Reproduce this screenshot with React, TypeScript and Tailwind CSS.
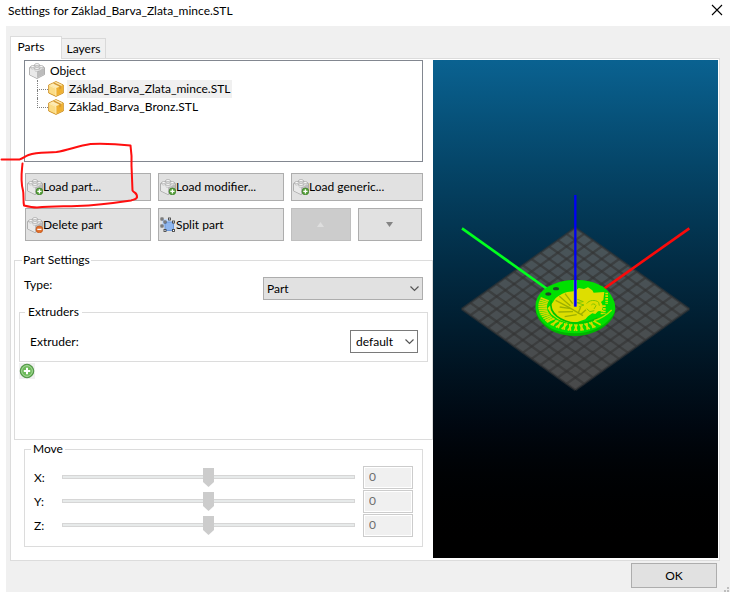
import { useState } from "react";

function BrickIcon({ badge }: { badge?: "add" | "remove" }) {
  return (
    <svg className="size-4 shrink-0" viewBox="0 0 16 16" aria-hidden="true">
      <path d="M.5 4.6 8 1.8l7.500 2.800v7L8 15.500.5 11.800Z" fill="#f6f6f6" stroke="#989898" strokeWidth=".8" />
      <path d="M.9 5.2 8 8.400v6.700L.9 11.600Z" fill="#e9e9e9" />
      <path d="M8 8.400 15.100 5.200v6.300L8 15.100Z" fill="#bcbcbc" />
      <g fill="#fbfbfb" stroke="#9a9a9a" strokeWidth=".6">
        <path d="M5.800 1.500v1.600c0 1.200 4.400 1.200 4.400 0V1.500" />
        <ellipse cx="8" cy="1.500" rx="2.200" ry="1" />
        <path d="M1.800 3.500v1.600c0 1.200 4 1.200 4 0V3.500" />
        <ellipse cx="3.800" cy="3.500" rx="2" ry="1" />
        <path d="M10.200 3.500v1.600c0 1.200 4 1.200 4 0V3.500" />
        <ellipse cx="12.200" cy="3.500" rx="2" ry="1" />
        <path d="M5.800 5.600v1.700c0 1.200 4.400 1.200 4.400 0V5.600" />
        <ellipse cx="8" cy="5.600" rx="2.200" ry="1" />
      </g>
      {badge && (
        <g>
          <circle cx="12.4" cy="12.4" r="3.4" fill={badge === "add" ? "#5aa33c" : "#e2702c"} stroke={badge === "add" ? "#2f7420" : "#b94d13"} strokeWidth=".6" />
          <path d={badge === "add" ? "M10.3 12.4h4.2M12.4 10.3v4.2" : "M10.3 12.4h4.2"} stroke="#fff" strokeWidth="1.3" />
        </g>
      )}
    </svg>
  );
}

function PartIcon() {
  return (
    <svg className="size-4 shrink-0" viewBox="0 0 16 16" aria-hidden="true">
      <path d="M8 .6 15.3 4v8L8 15.4.7 12V4Z" fill="#f8cf63" stroke="#c98a1e" strokeWidth=".9" />
      <path d="M1.2 4.3 8 7.6v7.2l-6.8-3.2Z" fill="#fbdc86" />
      <path d="M8 7.6 14.8 4.3v7.3L8 14.8Z" fill="#efb030" />
      <path d="M1.6 4 8 1.1 14.4 4 8 7.1Z" fill="#fdebb5" />
      <path d="M5 2.5 11.3 5.5v2.9l1.8-.9V4.7L6.8 1.7Z" fill="#d69a34" />
      <path d="M1.2 4.3 8 7.5v7.3" fill="none" stroke="#fff3cd" strokeWidth=".7" />
    </svg>
  );
}

function SplitIcon() {
  const handles = [[2, 2], [9.5, 2], [2, 9], [5, 5], [13.5, 5], [5, 13.5], [13.5, 13.5]];
  return (
    <svg className="size-4 shrink-0" viewBox="0 0 16 16" aria-hidden="true">
      <rect x="2" y="2" width="8" height="7" fill="#c7dbf7" />
      <rect x="5" y="5" width="8.5" height="8.5" fill="#8fb6ee" stroke="#6a98dc" />
      {handles.map(([x, y]) => (
        <rect key={`${x}-${y}`} x={x - 1} y={y - 1} width="2" height="2" fill="#fff" stroke="#444" strokeWidth=".9" />
      ))}
    </svg>
  );
}

function AddIcon() {
  return (
    <svg className="size-4" viewBox="0 0 16 16" aria-hidden="true">
      <circle cx="8" cy="8" r="6.8" fill="#58a948" stroke="#3f8634" strokeWidth=".8" />
      <circle cx="8" cy="8" r="5.4" fill="#6dba5a" stroke="#b5dfaa" strokeWidth=".9" />
      <path d="M4.8 8h6.4M8 4.8v6.4" stroke="#fff" strokeWidth="2" />
    </svg>
  );
}

function Chevron() {
  return (
    <svg className="pointer-events-none absolute right-1 top-2 h-2 w-[9px]" viewBox="0 0 9 8" aria-hidden="true">
      <path d="M.5 1.5l4 4 4-4" fill="none" stroke="#555" strokeWidth="1.2" />
    </svg>
  );
}

const buttonStyle = "flex items-center border border-[#adadad] bg-[#e1e1e1]";

function Tree() {
  return (
    <ul className="h-[102px] border border-[#828790] bg-white pl-1 pt-px leading-[18px]">
      <li>
        <div className="flex h-[18px] items-center gap-[5px]">
          <BrickIcon />
          Object
        </div>
        <ul className="pl-2">
          {["Základ_Barva_Zlata_mince.STL", "Základ_Barva_Bronz.STL"].map((name, i) => (
            <li key={name} className="flex h-[18px] items-center">
              <div className="w-[11px] self-stretch">
                <div className="h-[10px] border-b border-l border-dotted border-[#808080]" />
                {i === 0 && <div className="h-2 border-l border-dotted border-[#808080]" />}
              </div>
              <PartIcon />
              <span className={i === 0 ? "ml-[3px] bg-[#f0f0f0] px-[2px]" : "ml-[3px] px-[2px]"}>{name}</span>
            </li>
          ))}
        </ul>
      </li>
    </ul>
  );
}

function AxisRow({ axis }: { axis: string }) {
  const id = `move-${axis}`;
  return (
    <div className="flex h-6 items-center">
      <label htmlFor={id} className="w-7 shrink-0 pt-px">
        {axis}:
      </label>
      <input
        id={id}
        type="range"
        disabled
        defaultValue={50}
        className="h-5 min-w-0 flex-1 appearance-none bg-transparent [&::-webkit-slider-runnable-track]:h-1 [&::-webkit-slider-runnable-track]:border [&::-webkit-slider-runnable-track]:border-[#d6d6d6] [&::-webkit-slider-runnable-track]:bg-[#e7eaea] [&::-webkit-slider-thumb]:-mt-2 [&::-webkit-slider-thumb]:h-[19px] [&::-webkit-slider-thumb]:w-[11px] [&::-webkit-slider-thumb]:appearance-none [&::-webkit-slider-thumb]:bg-[#cccccc] [&::-webkit-slider-thumb]:[clip-path:polygon(0_0,100%_0,100%_74%,50%_100%,0_74%)]"
      />
      <input
        type="text"
        disabled
        defaultValue="0"
        aria-label={`${axis} value`}
        className="ml-2 h-[23px] w-[50px] border border-[#cccccc] bg-[#f0f0f0] px-[5px] pb-px text-[#6d6d6d] shadow-[inset_0_0_0_1px_#fff]"
      />
    </div>
  );
}

function Coin() {
  // strokes of the rim, as [angle, slant] pairs
  const marks = [];
  for (let deg = 140; deg <= 204; deg += 5) marks.push([deg, 0]);
  for (let deg = 52; deg < 138; deg += 5) marks.push([deg, deg % 2 ? 5 : -4]);
  return (
    <g>
      <path d="M257 364c4-46 56-79 120-79 55 0 92 22 106 48 16 26 20 52-4 77-20 23-60 43-104 43-45 0-78-14-99-38-16-18-20-33-19-51Z" fill="#00b400" />
      <path d="M257 358c4-43 56-73 120-73 55 0 92 20 106 45 16 26 19 49-4 73-20 23-60 42-104 42-45 0-78-13-99-36-16-18-20-33-19-51Z" fill="#00e000" />
      <g stroke="#d2da00" strokeWidth="5">
        {marks.map(([deg, slant]) => {
          const a = (deg * Math.PI) / 180;
          const b = ((deg + slant) * Math.PI) / 180;
          return (
            <line key={deg} x1={377 + 86 * Math.cos(a)} y1={366 + 52 * Math.sin(a)} x2={377 + 112 * Math.cos(b)} y2={364 + 74 * Math.sin(b)} />
          );
        })}
      </g>
      <path
        d="M309 352c5-14 22-25 43-31l25-3 9-9 16 3 12-5 13 9 4 7 32-2-3 24-7 6 6 12-3 14-12 2-8 8-9-2-13 9-8 9-24 8-31 2-27-10-20-15-11-18Z"
        fill="#dede00"
      />
      <path d="M304 346c-5 20 2 36 17 48 15 12 34 19 56 20 24 0 48-5 66-15" fill="none" stroke="#00c400" strokeWidth="5" />
      <path d="M432 407c22-6 39-18 53-32" fill="none" stroke="#b8dc00" strokeWidth="4" />
      <g fill="none" stroke="#9cb000" strokeWidth="4">
        <path d="M317 346l40 21 42 25M328 334l33 28M345 326l23 30M329 366l34 5M325 381l44-1M344 395l36-6M392 366l-8 20M408 374l-15 14" />
      </g>
      <g fill="none" stroke="#7fc400" strokeWidth="3">
        <path d="M382 343l18 7-20 3 22 7-16 6" />
        <path d="M410 356c7-11 26-13 36-4l2 10M424 360c4-5 11-4 14 2l-6 10M410 371l10 9 13-3" />
      </g>
      <path d="M470 323v34m-7 4v26m-7-12v14" stroke="#d6dc00" strokeWidth="8" strokeDasharray="5 3" />
      <g fill="#204a2c">
        <ellipse cx="318" cy="311" rx="9" ry="5" />
        <ellipse cx="295" cy="327" rx="9" ry="5" />
      </g>
    </g>
  );
}

function Preview() {
  const steps = Array.from({ length: 14 }, (_, i) => i / 13);
  return (
    <div className="min-w-0 flex-1 bg-linear-to-b from-[#0a6291] to-black">
      <svg className="size-full" viewBox="0 0 285 498" role="img" aria-label="3D preview">
        <g transform="translate(17 125) scale(.33333)">
          <path d="M376 128 718 372 376 615 35 372Z" fill="#686460" fillOpacity=".7" />
          <g stroke="#333333" strokeOpacity=".62" strokeWidth="7">
            {steps.map((t) => (
              <g key={t}>
                <line x1={376 - 341 * t} y1={128 + 244 * t} x2={718 - 342 * t} y2={372 + 243 * t} />
                <line x1={376 + 342 * t} y1={128 + 244 * t} x2={35 + 341 * t} y2={372 + 243 * t} />
              </g>
            ))}
          </g>
          <path d="M36 130 376 372" stroke="#00ff1e" strokeWidth="8" />
          <path d="M718 130 376 372" stroke="#fa0a0a" strokeWidth="8" />
          <Coin />
          <path d="M376 286v78" stroke="#8585c0" strokeWidth="10" />
          <path d="M376 30v335" stroke="#0000f5" strokeWidth="7" />
        </g>
      </svg>
    </div>
  );
}

// red pen mark around the "Load part..." button
function PenMark() {
  return (
    <svg className="pointer-events-none absolute left-0 top-[140px] h-[72px] w-[140px]" viewBox="0 0 140 72" aria-hidden="true">
      <path
        d="M1.5 19.5h18c4-1 5-3 9-4.5 9-3 19-2 28-3 12-2 21-6 34-8 13-.5 26 0 40 1.5 1 7 1.5 11 1 20l1 25c2 3 5 2 4.5 7-1 2-3 2-6 3-20 3-38 5-54 5.5-14 .5-26 0-40 1.5-5 0-9-1-13-2-1-5 0-11-1-15-3-11-1-20-.5-27"
        fill="none"
        stroke="#ff0f0f"
        strokeWidth="2"
        strokeLinejoin="round"
        strokeLinecap="round"
      />
    </svg>
  );
}

export default function App() {
  const [type, setType] = useState("Part");
  const [extruder, setExtruder] = useState("default");

  return (
    <div className="relative flex min-h-screen flex-col bg-white font-[Lato,'Open_Sans',sans-serif] text-[12px] leading-4 text-black">
      <header className="flex h-[26px] items-start justify-between pl-2 pr-[7px] pt-[3px]">
        <h1>Settings for Základ_Barva_Zlata_mince.STL</h1>
        <button type="button" aria-label="Close" className="mt-px">
          <svg className="size-3" viewBox="0 0 12 12" aria-hidden="true">
            <path d="M1 1l10 10M11 1L1 11" stroke="#000" strokeWidth="1.1" />
          </svg>
        </button>
      </header>

      <main className="ml-[6px] flex flex-1 flex-col bg-[#f0f0f0] pl-1 pr-[10px] pt-[10px]">
        <div role="tablist" className="flex items-end">
          <button type="button" role="tab" aria-selected="true" className="z-10 -mb-px h-[23px] w-[52px] border border-b-0 border-[#dcdcdc] bg-white pb-[2px] pr-[10px]">
            Parts
          </button>
          <button type="button" role="tab" aria-selected="false" className="h-5 w-11 border border-b-0 border-l-0 border-[#d9d9d9] bg-[#f0f0f0]">
            Layers
          </button>
        </div>

        <div className="flex flex-1 border border-[#dcdcdc] bg-white p-px pb-[2px] pl-[3px]">
          <div className="w-[419px] shrink-0">
            <div className="px-[10px]">
              <Tree />
              <div className="ml-px mt-[11px] grid grid-cols-[126fr_126fr_132fr] gap-[7px]">
                <button type="button" className={`${buttonStyle} h-7 pl-px`}>
                  <BrickIcon badge="add" />
                  Load part...
                </button>
                <button type="button" className={`${buttonStyle} h-7 pl-px`}>
                  <BrickIcon badge="add" />
                  Load modifier...
                </button>
                <button type="button" className={`${buttonStyle} h-7 pl-px`}>
                  <BrickIcon badge="add" />
                  Load generic...
                </button>
                <button type="button" className={`${buttonStyle} h-[33px] pl-px`}>
                  <BrickIcon badge="remove" />
                  Delete part
                </button>
                <button type="button" className={`${buttonStyle} h-[33px] pl-px`}>
                  <SplitIcon />
                  Split part
                </button>
                <div className="flex gap-[7px] pr-px">
                  <button type="button" disabled aria-label="Move up" className="flex flex-[59] items-center justify-center border border-[#bfbfbf] bg-[#cccccc]">
                    <svg className="h-[5px] w-[7px]" viewBox="0 0 7 5" aria-hidden="true">
                      <path d="M3.5 0 7 5H0Z" fill="#dedede" />
                    </svg>
                  </button>
                  <button type="button" aria-label="Move down" className={`${buttonStyle} flex-[64] justify-center`}>
                    <svg className="h-[5px] w-[7px]" viewBox="0 0 7 5" aria-hidden="true">
                      <path d="M0 0h7L3.5 5Z" fill="#848484" />
                    </svg>
                  </button>
                </div>
              </div>
            </div>

            <fieldset className="mt-[11px] h-[188px] border border-[#dcdcdc] px-1">
              <legend className="ml-[3px] px-px">Part Settings</legend>
              <div className="mt-[9px] flex items-start justify-between px-[5px]">
                <label htmlFor="part-type">Type:</label>
                <div className="relative">
                  <select
                    id="part-type"
                    value={type}
                    onChange={(e) => setType(e.target.value)}
                    className="h-[23px] w-40 appearance-none border border-[#adadad] bg-[#e1e1e1] pl-[3px]"
                  >
                    <option>Part</option>
                    <option>Modifier</option>
                  </select>
                  <Chevron />
                </div>
              </div>
              <fieldset className="mt-1 border border-[#dcdcdc] pb-2 pl-[10px] pr-[9px]">
                <legend className="-ml-[5px] px-[3px]">Extruders</legend>
                <div className="mt-[10px] flex items-center justify-between">
                  <label htmlFor="extruder">Extruder:</label>
                  <div className="relative">
                    <select
                      id="extruder"
                      value={extruder}
                      onChange={(e) => setExtruder(e.target.value)}
                      className="h-[23px] w-[68px] appearance-none border border-[#7a7a7a] bg-white pl-[5px]"
                    >
                      <option>default</option>
                      <option>1</option>
                    </select>
                    <Chevron />
                  </div>
                </div>
              </fieldset>
              <button type="button" aria-label="Add setting" className="mt-px block size-4 bg-[#f0f0f0]">
                <AddIcon />
              </button>
            </fieldset>

            <fieldset className="mx-[10px] mt-px border border-[#dcdcdc] px-[9px] pb-[9px]">
              <legend className="-ml-[3px] px-[2px]">Move</legend>
              <div className="mt-2">
                <AxisRow axis="X" />
                <AxisRow axis="Y" />
                <AxisRow axis="Z" />
              </div>
            </fieldset>
          </div>

          <Preview />
        </div>

        <footer className="flex h-[31px] items-start justify-end pr-[3px] pt-[2px]">
          <button type="button" className="h-[25px] w-[86px] border border-[#adadad] bg-[#e1e1e1]">
            OK
          </button>
        </footer>
      </main>
      <svg className="absolute bottom-0 right-0 size-2" viewBox="0 0 8 8" aria-hidden="true">
        <path d="M5 3h2v2H5ZM2 6h2v2H2ZM5 6h2v2H5Z" fill="#bfbfbf" />
      </svg>
      <PenMark />
    </div>
  );
}
